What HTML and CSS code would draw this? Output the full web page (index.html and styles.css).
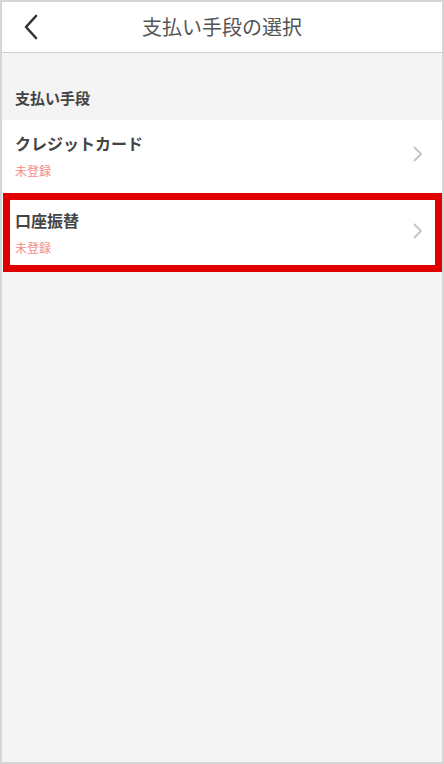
FILE: index.html
```html
<!DOCTYPE html>
<html lang="ja">
<head>
<meta charset="utf-8">
<link rel="stylesheet" href="styles.css">
</head>
<body>
<div class="frame">
  <header class="header">
    <button class="back" aria-label="戻る">
      <svg width="16" height="26" viewBox="0 0 16 26"><path d="M13 2 L3 13 L13 24" fill="none" stroke="#333" stroke-width="2.6" stroke-linecap="round" stroke-linejoin="round"/></svg>
    </button>
    <h1 class="title">支払い手段の選択</h1>
  </header>
  <main class="content">
    <h2 class="section-label">支払い手段</h2>
    <ul class="list">
      <li class="row">
        <div class="row-text">
          <div class="row-title">クレジットカード</div>
          <div class="row-sub">未登録</div>
        </div>
        <svg class="chev" width="10" height="16" viewBox="0 0 10 16"><path d="M1.5 1.5 L8 8 L1.5 14.5" fill="none" stroke="#c6c6c6" stroke-width="2" stroke-linecap="round" stroke-linejoin="round"/></svg>
      </li>
      <li class="row highlighted">
        <div class="row-text">
          <div class="row-title">口座振替</div>
          <div class="row-sub">未登録</div>
        </div>
        <svg class="chev" width="10" height="16" viewBox="0 0 10 16"><path d="M1.5 1.5 L8 8 L1.5 14.5" fill="none" stroke="#c6c6c6" stroke-width="2" stroke-linecap="round" stroke-linejoin="round"/></svg>
      </li>
    </ul>
  </main>
</div>
</body>
</html>
```

FILE: styles.css
```css
* { box-sizing: border-box; }
html, body { margin: 0; padding: 0; }
body {
  font-family: "Noto Sans CJK JP", "Noto Sans", sans-serif;
  background: #d6d6d6;
}
.frame {
  width: 444px;
  height: 764px;
  border: 2px solid #d6d6d6;
  background: #f4f4f4;
  display: flex;
  flex-direction: column;
}
.header {
  height: 51px;
  background: #fff;
  border-bottom: 1px solid #d0d0d0;
  display: flex;
  align-items: center;
  justify-content: center;
  position: relative;
}
.back {
  position: absolute;
  left: 21px;
  top: 12px;
  background: none;
  border: 0;
  padding: 0;
  width: 16px;
  height: 26px;
}
.back svg { display: block; }
.title {
  margin: 0;
  font-size: 20px;
  font-weight: 400;
  color: #555;
  line-height: 24px;
}
.content {
  flex: 1;
  display: flex;
  flex-direction: column;
}
.section-label {
  margin: 35px 0 12px 13px;
  font-size: 15px;
  line-height: 20px;
  font-weight: 700;
  color: #444;
}
.list {
  list-style: none;
  margin: 0;
  padding: 0;
  display: flex;
  flex-direction: column;
  gap: 2px;
}
.row {
  height: 75px;
  background: #fff;
  display: flex;
  align-items: flex-start;
  padding: 13px 19px 0 13px;
  position: relative;
}
.row-text {
  flex: 1;
  display: flex;
  flex-direction: column;
  gap: 11px;
}
.row-title {
  font-size: 16px;
  line-height: 20px;
  font-weight: 700;
  color: #444;
}
.row-sub {
  font-size: 12px;
  line-height: 14px;
  color: #f38a8a;
}
.chev {
  display: block;
  margin-top: 13px;
}
.highlighted::after {
  content: "";
  position: absolute;
  left: 1px;
  right: 0;
  top: -4px;
  bottom: 0;
  border: 7px solid #e00000;
  pointer-events: none;
}
```
